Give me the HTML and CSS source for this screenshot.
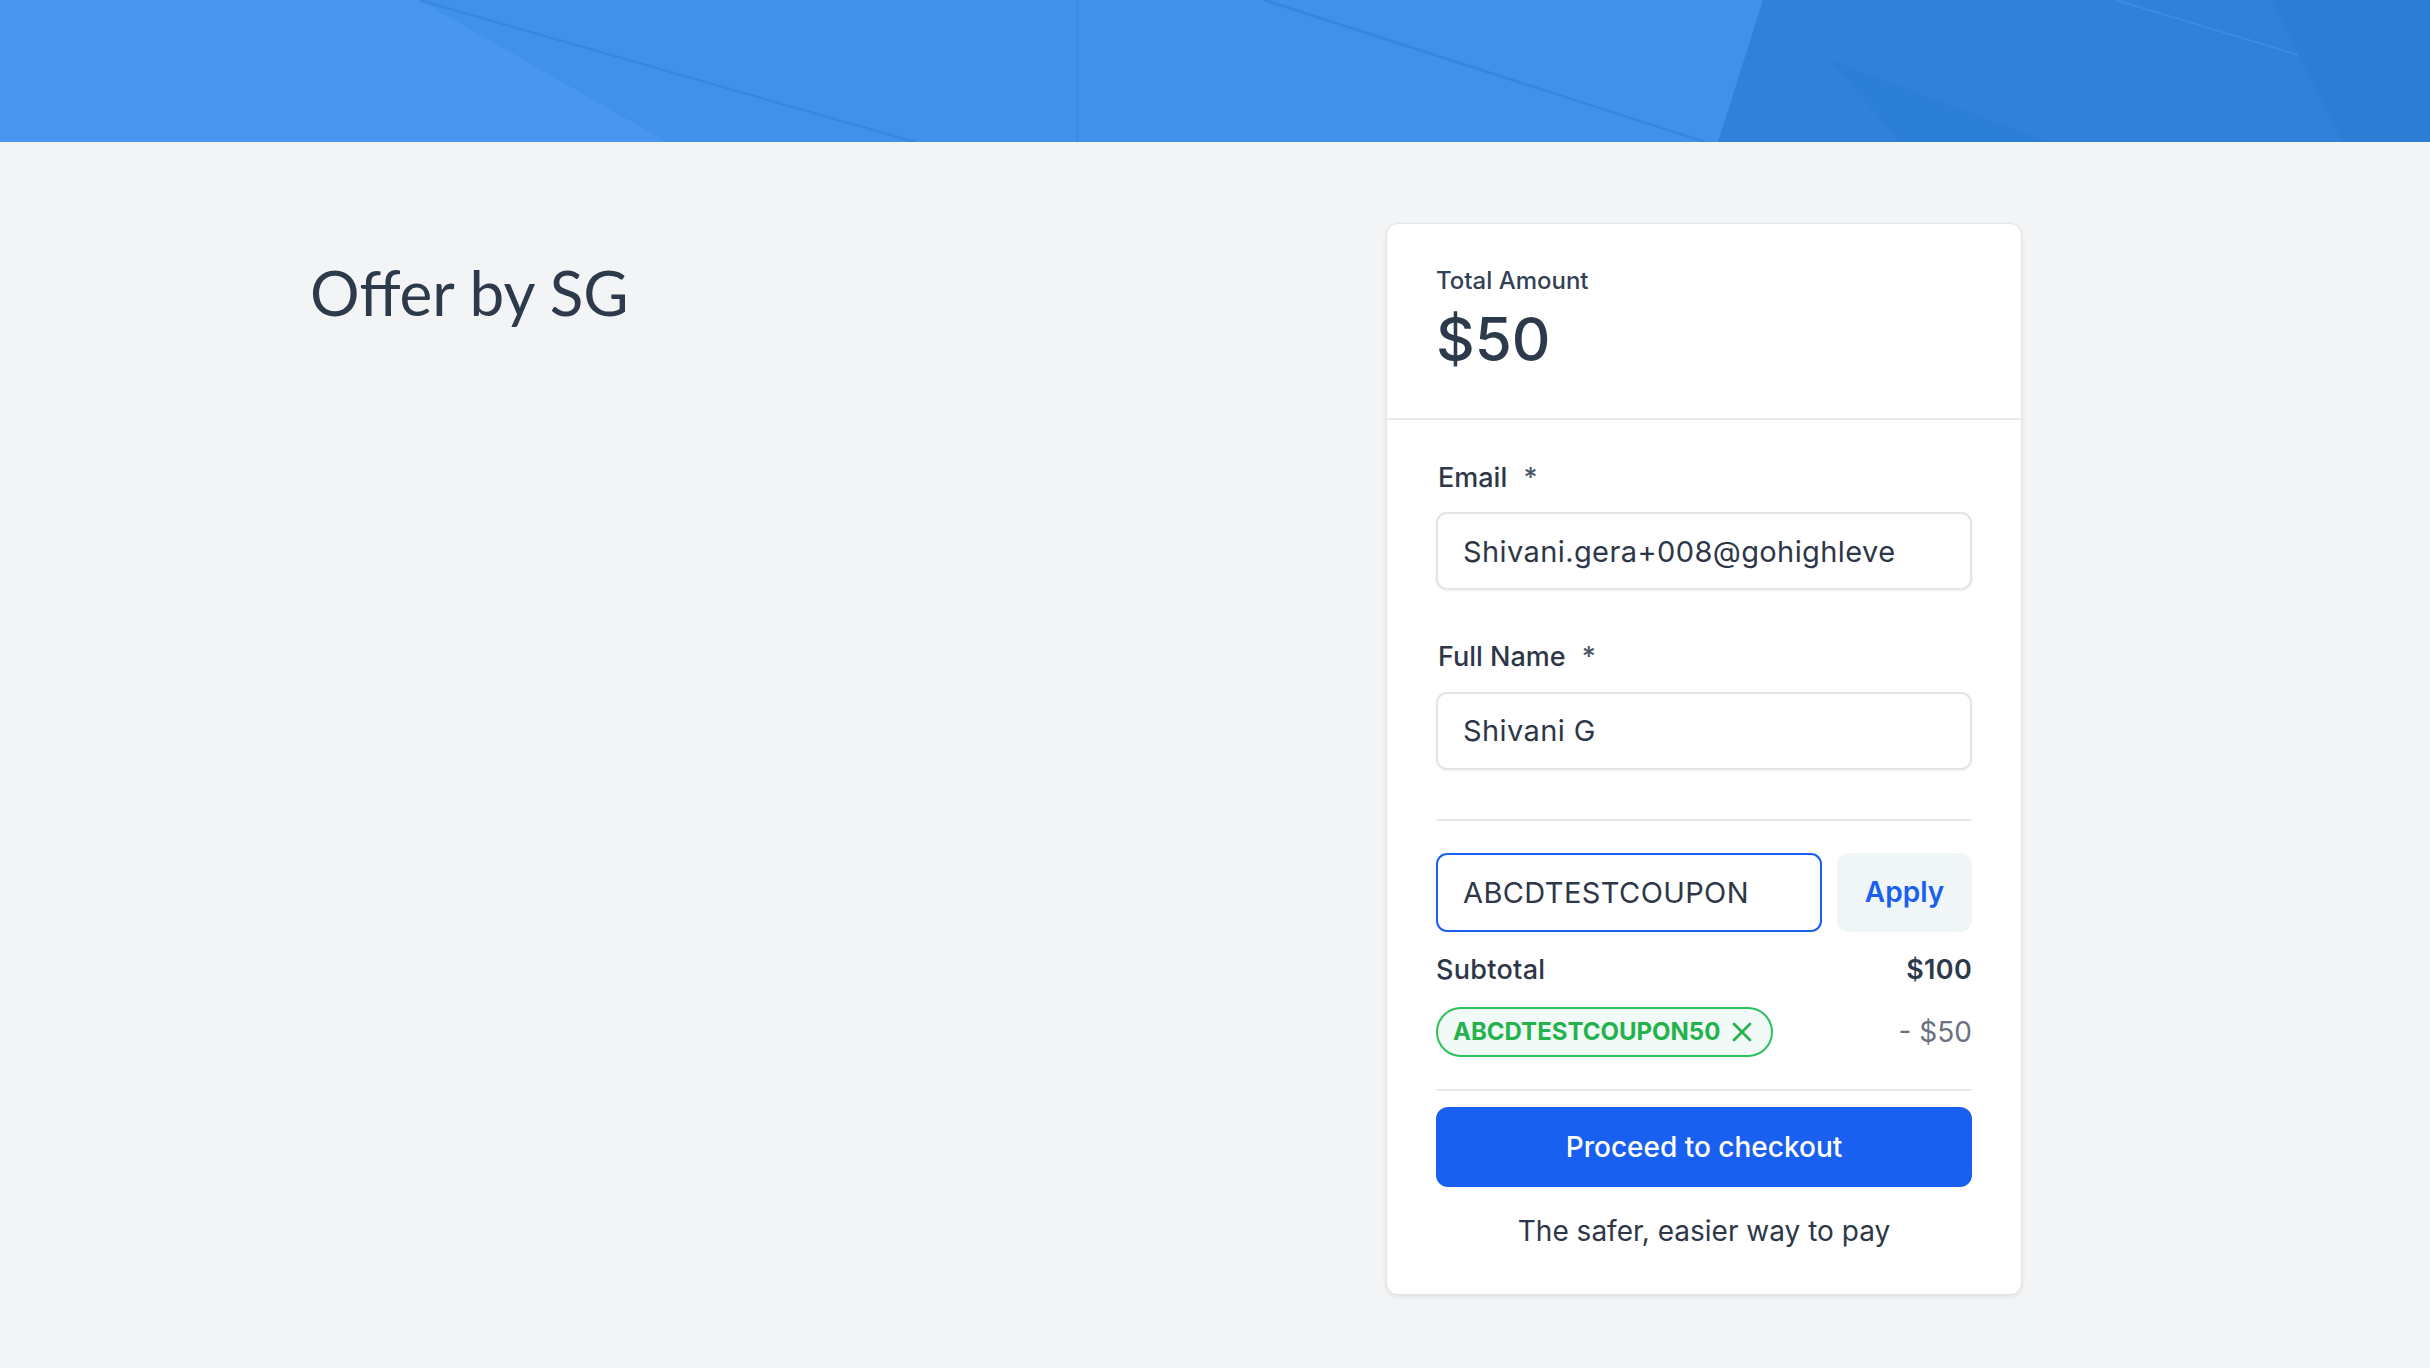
FILE: index.html
```html
<!DOCTYPE html>
<html lang="en">
<head>
    <meta charset="UTF-8">
    <meta name="viewport" content="width=device-width, initial-scale=1.0">
    <title>Offer by SG</title>
    <link rel="stylesheet" href="styles.css">
</head>
<body>

    <!-- Top banner -->
    <div class="banner">
        <svg viewBox="0 0 2430 142" preserveAspectRatio="none" width="100%" height="142">
            <rect x="0" y="0" width="2430" height="142" fill="#3f91ea"/>
            <polygon points="0,0 419,0 667,142 0,142" fill="#4896ed"/>
            <line x1="419" y1="0" x2="915" y2="142" stroke="#3583dc" stroke-width="2.5" opacity="0.7"/>
            <line x1="1077" y1="0" x2="1077" y2="142" stroke="#3a8ae3" stroke-width="2"/>
            <line x1="1264" y1="0" x2="1705" y2="142" stroke="#3583dc" stroke-width="2.5" opacity="0.8"/>
            <polygon points="1763,0 2430,0 2430,142 1718,142" fill="#2f81da"/>
            <polygon points="1830,60 2050,142 1900,142" fill="#2c7ed6" opacity="0.6"/>
            <line x1="2116" y1="0" x2="2302" y2="56" stroke="#3c8ce4" stroke-width="2"/>
            <polygon points="2271,0 2430,0 2430,142 2342,142" fill="#2d7dd5"/>
        </svg>
    </div>

    <div class="content">
        <div class="offer">
            <h1 class="offer-title">Offer by SG</h1>
        </div>

        <div class="checkout-card">
            <div class="card-header">
                <div class="total-label">Total Amount</div>
                <div class="total-value">$50</div>
            </div>

            <div class="card-body">
                <label class="field-label" for="email">Email <span class="req">*</span></label>
                <input class="field-input" type="text" id="email" value="Shivani.gera+008@gohighleve">

                <label class="field-label name-label" for="fullname">Full Name <span class="req">*</span></label>
                <input class="field-input" type="text" id="fullname" value="Shivani G">

                <div class="divider"></div>

                <div class="coupon-row">
                    <input class="coupon-input" type="text" value="ABCDTESTCOUPON">
                    <button class="apply-btn">Apply</button>
                </div>

                <div class="summary-row">
                    <span class="summary-name">Subtotal</span>
                    <span class="summary-amount">$100</span>
                </div>

                <div class="discount-row">
                    <span class="coupon-tag">
                        ABCDTESTCOUPON50
                        <svg class="tag-close" viewBox="0 0 22 22" width="22" height="22">
                            <path d="M3 3 L19 19 M19 3 L3 19" stroke="#27b34f" stroke-width="2.8" stroke-linecap="round" fill="none"/>
                        </svg>
                    </span>
                    <span class="discount-amount">- $50</span>
                </div>

                <div class="divider divider-bottom"></div>

                <button class="checkout-btn">Proceed to checkout</button>

                <p class="safe-note">The safer, easier way to pay</p>
            </div>
        </div>
    </div>

</body>
</html>
```

FILE: styles.css
```css
body {
    margin: 0;
    padding: 0;
    background: #f3f4f6;
    font-family: 'Inter', 'Noto Sans', sans-serif;
    color: #2d3748;
}
.banner {
    height: 142px;
    overflow: hidden;
}
.banner svg {
    display: block;
}
.content {
    display: grid;
    grid-template-columns: 1076px 636px;
    padding: 81px 0 68px 310px;
}
.offer-title {
    font-family: 'Lato', 'Open Sans', sans-serif;
    font-weight: 400;
    font-size: 62px;
    line-height: 1.2;
    color: #2d3a4b;
    margin: 32px 0 0 0;
}
/* Checkout card */
.checkout-card {
    background: #fff;
    border: 1px solid #e2e4e8;
    border-radius: 12px;
    box-shadow: 0 2px 5px rgba(0, 0, 0, 0.08);
}
.card-header {
    padding: 43px 49px 43px;
    border-bottom: 2px solid #e7e8ec;
}
.total-label {
    font-size: 24px;
    line-height: 1.2;
    font-weight: 500;
    color: #334155;
    margin-bottom: 7px;
}
.total-value {
    font-size: 60px;
    line-height: 1.2;
    font-weight: 500;
    color: #2d3a4b;
}
.card-body {
    display: flex;
    flex-direction: column;
    padding: 42px 49px 45px 49px;
}
.field-label {
    font-size: 27px;
    line-height: 1.2;
    font-weight: 500;
    color: #2d3748;
    padding-left: 2px;
    margin-bottom: 18px;
}
.name-label {
    margin-top: 51px;
}
.req {
    margin-left: 9px;
    color: #4b5563;
}
.field-input,
.coupon-input {
    box-sizing: border-box;
    height: 78px;
    width: 100%;
    padding: 0 25px;
    border: 2px solid #e2e4e9;
    border-radius: 11px;
    font-family: 'Inter', 'Noto Sans', sans-serif;
    font-size: 29px;
    letter-spacing: 0.4px;
    color: #2d3748;
    background: #fff;
    outline: none;
    box-shadow: 0 1px 3px rgba(0, 0, 0, 0.05);
}
.divider {
    height: 2px;
    background: #e7e8ec;
    margin-top: 49px;
}
.coupon-row {
    display: flex;
    gap: 15px;
    margin-top: 32px;
}
.coupon-input {
    flex: 1;
    height: 79px;
    border-color: #1a60f0;
    box-shadow: none;
}
.apply-btn {
    width: 135px;
    height: 79px;
    border: none;
    border-radius: 12px;
    background: #f0f6f7;
    color: #1a5ff0;
    font-family: 'Inter', 'Noto Sans', sans-serif;
    font-size: 28px;
    font-weight: 600;
    cursor: pointer;
}
.summary-row,
.discount-row {
    display: flex;
    justify-content: space-between;
    align-items: center;
}
.summary-row {
    margin-top: 22px;
    font-size: 27px;
    line-height: 1.2;
    font-weight: 500;
    letter-spacing: 0.3px;
}
.summary-amount {
    font-weight: 600;
    color: #2d3a4b;
}
.discount-row {
    margin-top: 21px;
}
.coupon-tag {
    box-sizing: border-box;
    display: flex;
    align-items: center;
    gap: 11px;
    height: 50px;
    padding: 0 18px 0 15px;
    border: 2px solid #2ec05f;
    border-radius: 25px;
    background: #f1faf6;
    color: #24b24d;
    font-size: 24px;
    font-weight: 700;
}
.tag-close {
    display: block;
}
.discount-amount {
    font-size: 28px;
    color: #6b7280;
}
.divider-bottom {
    margin-top: 32px;
}
.checkout-btn {
    margin-top: 16px;
    height: 80px;
    border: none;
    border-radius: 12px;
    background: #1a60f0;
    color: #fff;
    font-family: 'Inter', 'Noto Sans', sans-serif;
    font-size: 28px;
    font-weight: 500;
    cursor: pointer;
}
.safe-note {
    margin: 28px 0 0 0;
    text-align: center;
    font-size: 28px;
    line-height: 1.2;
    color: #2d3748;
}
```
